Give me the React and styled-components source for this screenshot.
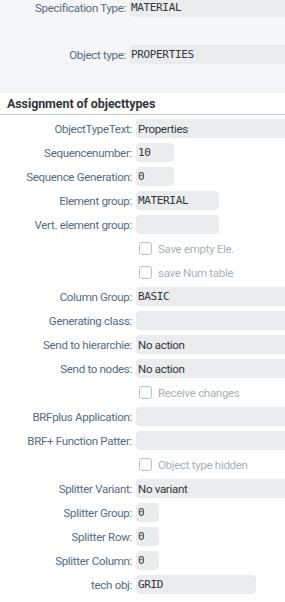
import React from "react"
import styled, { createGlobalStyle } from "styled-components"

const sans = '"Roboto", "Liberation Sans", Arial, sans-serif'
const mono = '"DejaVu Sans Mono", "Liberation Mono", monospace'

const GlobalStyle = createGlobalStyle`
  html, body {
    margin: 0;
    padding: 0;
    background: #ffffff;
    font-family: ${sans};
  }
`

const Page = styled.div`
  width: 285px;
  overflow: hidden;
`

const TopArea = styled.div`
  background: #f5f6f7;
  height: 95px;
  display: flex;
  flex-direction: column;
  gap: 28px;
  margin-top: -2px;
`

const Header = styled.div`
  height: 21px;
  display: flex;
  align-items: center;
  padding-left: 7px;
  font-weight: bold;
  font-size: 12.5px;
  letter-spacing: -0.1px;
  color: #32363a;
  border-bottom: 1px solid #c5c9cd;
`

const Form = styled.div`
  display: flex;
  flex-direction: column;
  gap: 5px;
  padding-top: 4px;
`

const Row = styled.div`
  display: grid;
  grid-template-columns: ${p => p.$labelWidth}px 1fr;
  column-gap: ${p => p.$gap}px;
  align-items: center;
  height: 19px;
`

const Label = styled.div`
  text-align: right;
  font-size: 11.5px;
  letter-spacing: -0.3px;
  color: #556b82;
  white-space: nowrap;
`

const Field = styled.div`
  height: 19px;
  width: ${p => (p.$width ? `${p.$width}px` : "calc(100% + 6px)")};
  background: #ebeced;
  border-radius: 4px;
  display: flex;
  align-items: center;
  padding-left: 2px;
  box-sizing: border-box;
  font-size: ${p => (p.$mono ? "11px" : "11.5px")};
  letter-spacing: ${p => (p.$mono ? "-0.35px" : "-0.3px")};
  color: #32363a;
  font-family: ${p => (p.$mono ? mono : sans)};
  white-space: nowrap;
`

const CheckWrap = styled.div`
  display: flex;
  align-items: center;
  gap: 6px;
  padding-left: 3px;
  font-size: 11.5px;
  letter-spacing: -0.3px;
  color: #a9b0b8;
`

const Box = styled.span`
  width: 11px;
  height: 11px;
  border: 1px solid #b9c0c8;
  border-radius: 3px;
  background: #ffffff;
`

const TopRow = ({ label, value }) => (
  <Row $labelWidth={126} $gap={3}>
    <Label>{label}</Label>
    <Field $mono>{value}</Field>
  </Row>
)

const FieldRow = ({ label, value, width, mono }) => (
  <Row $labelWidth={132} $gap={4}>
    <Label>{label}</Label>
    <Field $width={width} $mono={mono}>{value}</Field>
  </Row>
)

const CheckRow = ({ label }) => (
  <Row $labelWidth={132} $gap={4}>
    <span />
    <CheckWrap>
      <Box />
      {label}
    </CheckWrap>
  </Row>
)

export default function App() {
  return (
    <Page>
      <GlobalStyle />
      <TopArea>
        <TopRow label="Specification Type:" value="MATERIAL" />
        <TopRow label="Object type:" value="PROPERTIES" />
      </TopArea>
      <Header>Assignment of objecttypes</Header>
      <Form>
        <FieldRow label="ObjectTypeText:" value="Properties" />
        <FieldRow label="Sequencenumber:" value="10" width={38} mono />
        <FieldRow label="Sequence Generation:" value="0" width={38} mono />
        <FieldRow label="Element group:" value="MATERIAL" width={83} mono />
        <FieldRow label="Vert. element group:" value="" width={83} />
        <CheckRow label="Save empty Ele." />
        <CheckRow label="save Num table" />
        <FieldRow label="Column Group:" value="BASIC" mono />
        <FieldRow label="Generating class:" value="" />
        <FieldRow label="Send to hierarchie:" value="No action" />
        <FieldRow label="Send to nodes:" value="No action" />
        <CheckRow label="Receive changes" />
        <FieldRow label="BRFplus Application:" value="" />
        <FieldRow label="BRF+ Function Patter:" value="" />
        <CheckRow label="Object type hidden" />
        <FieldRow label="Splitter Variant:" value="No variant" />
        <FieldRow label="Splitter Group:" value="0" width={23} mono />
        <FieldRow label="Splitter Row:" value="0" width={23} mono />
        <FieldRow label="Splitter Column:" value="0" width={23} mono />
        <FieldRow label="tech obj:" value="GRID" width={120} mono />
      </Form>
    </Page>
  )
}
